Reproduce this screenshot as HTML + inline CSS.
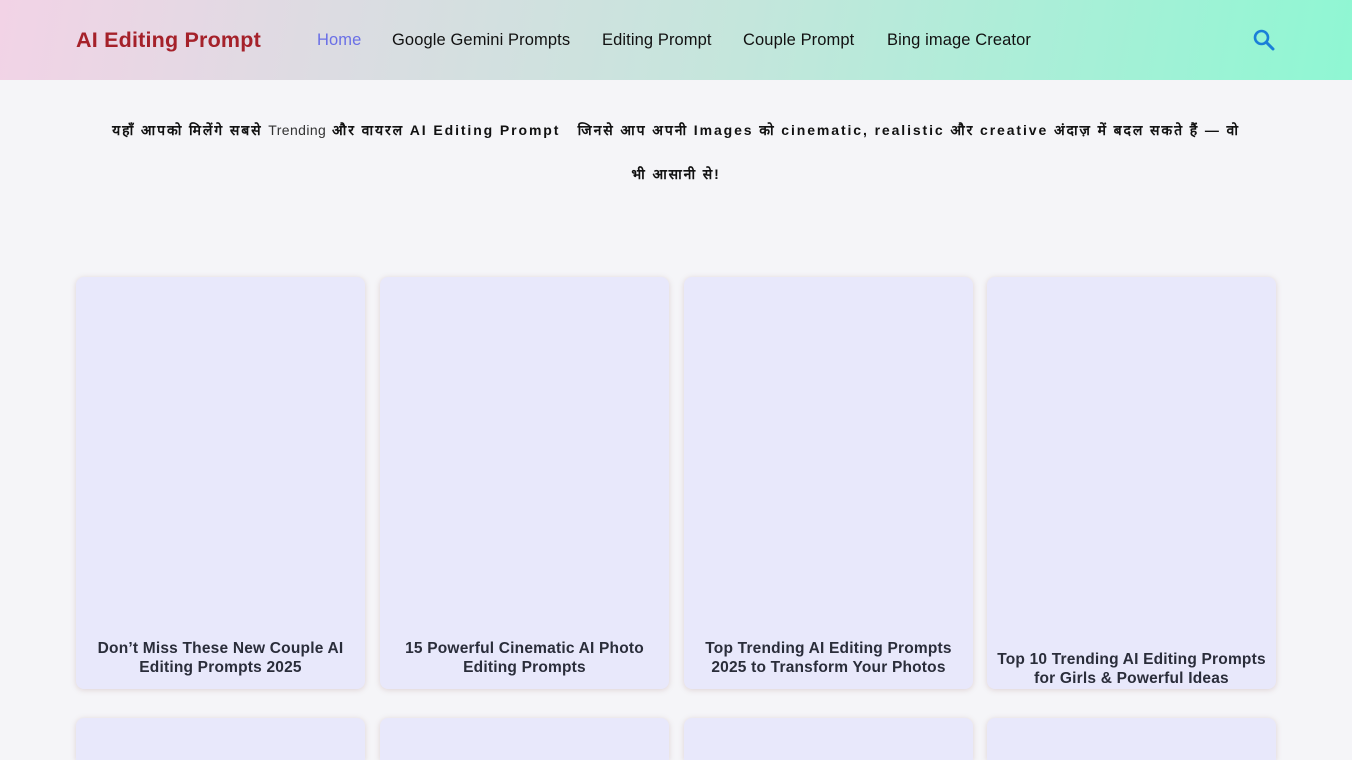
<!DOCTYPE html>
<html><head><meta charset="utf-8">
<style>
*{margin:0;padding:0;box-sizing:border-box}
html,body{width:1352px;height:760px;overflow:hidden;background:#f5f5f8;font-family:"Liberation Sans",sans-serif;position:relative}
header{position:absolute;left:0;top:0;width:1352px;height:80px;background:linear-gradient(100deg,#f2d3e6 0%,#dcdce2 25%,#c4e6dc 55%,#8ff7d3 100%)}
.logo{position:absolute;left:76px;top:28px;font-size:21.5px;color:#a5212a;font-weight:bold;letter-spacing:0.2px}
nav a{position:absolute;top:31px;font-size:16.5px;color:#111;text-decoration:none;letter-spacing:0.1px}
.srch{position:absolute;left:1252px;top:28px}
.intro{position:absolute;left:60px;width:1232px;text-align:center;font-size:14px;color:#111;font-weight:bold;letter-spacing:1.9px;white-space:nowrap}
.intro span{font-weight:normal;color:#333;letter-spacing:0.4px}
.card{position:absolute;width:289px;background:#e8e8fb;border-radius:8px;box-shadow:0 1px 6px rgba(170,130,130,0.3)}
.card p{position:absolute;left:4px;right:4px;text-align:center;font-size:15.5px;font-weight:bold;color:#2a2d3a;line-height:19px;letter-spacing:0.2px}
</style></head><body>
<header>
<div class="logo">AI Editing Prompt</div>
<nav>
<a style="left:317px;color:#6a6fe6">Home</a>
<a style="left:392px">Google Gemini Prompts</a>
<a style="left:602px">Editing Prompt</a>
<a style="left:743px">Couple Prompt</a>
<a style="left:887px">Bing image Creator</a>
</nav>
<svg class="srch" width="24" height="24" viewBox="0 0 24 24"><circle cx="9.5" cy="9.5" r="6.5" fill="none" stroke="#1a7fd8" stroke-width="2.6"/><path d="M14.5 14.5L21 21" stroke="#1a7fd8" stroke-width="3" stroke-linecap="round"/></svg>
</header>
<div class="intro" style="top:121px">यहाँ आपको मिलेंगे सबसे <span>Trending</span> और वायरल AI Editing Prompt &nbsp; जिनसे आप अपनी Images को cinematic, realistic और creative अंदाज़ में बदल सकते हैं — वो</div>
<div class="intro" style="top:165px">भी आसानी से!</div>

<div class="card" style="left:76px;top:277px;height:412px"><p style="top:362px">Don’t Miss These New Couple AI Editing Prompts 2025</p></div>
<div class="card" style="left:380px;top:277px;height:412px"><p style="top:362px">15 Powerful Cinematic AI Photo Editing Prompts</p></div>
<div class="card" style="left:684px;top:277px;height:412px"><p style="top:362px">Top Trending AI Editing Prompts 2025 to Transform Your Photos</p></div>
<div class="card" style="left:987px;top:277px;height:412px"><p style="top:373px">Top 10 Trending AI Editing Prompts for Girls &amp; Powerful Ideas</p></div>

<div class="card" style="left:76px;top:718px;height:42px;border-radius:8px 8px 0 0"></div>
<div class="card" style="left:380px;top:718px;height:42px;border-radius:8px 8px 0 0"></div>
<div class="card" style="left:684px;top:718px;height:42px;border-radius:8px 8px 0 0"></div>
<div class="card" style="left:987px;top:718px;height:42px;border-radius:8px 8px 0 0"></div>
</body></html>
